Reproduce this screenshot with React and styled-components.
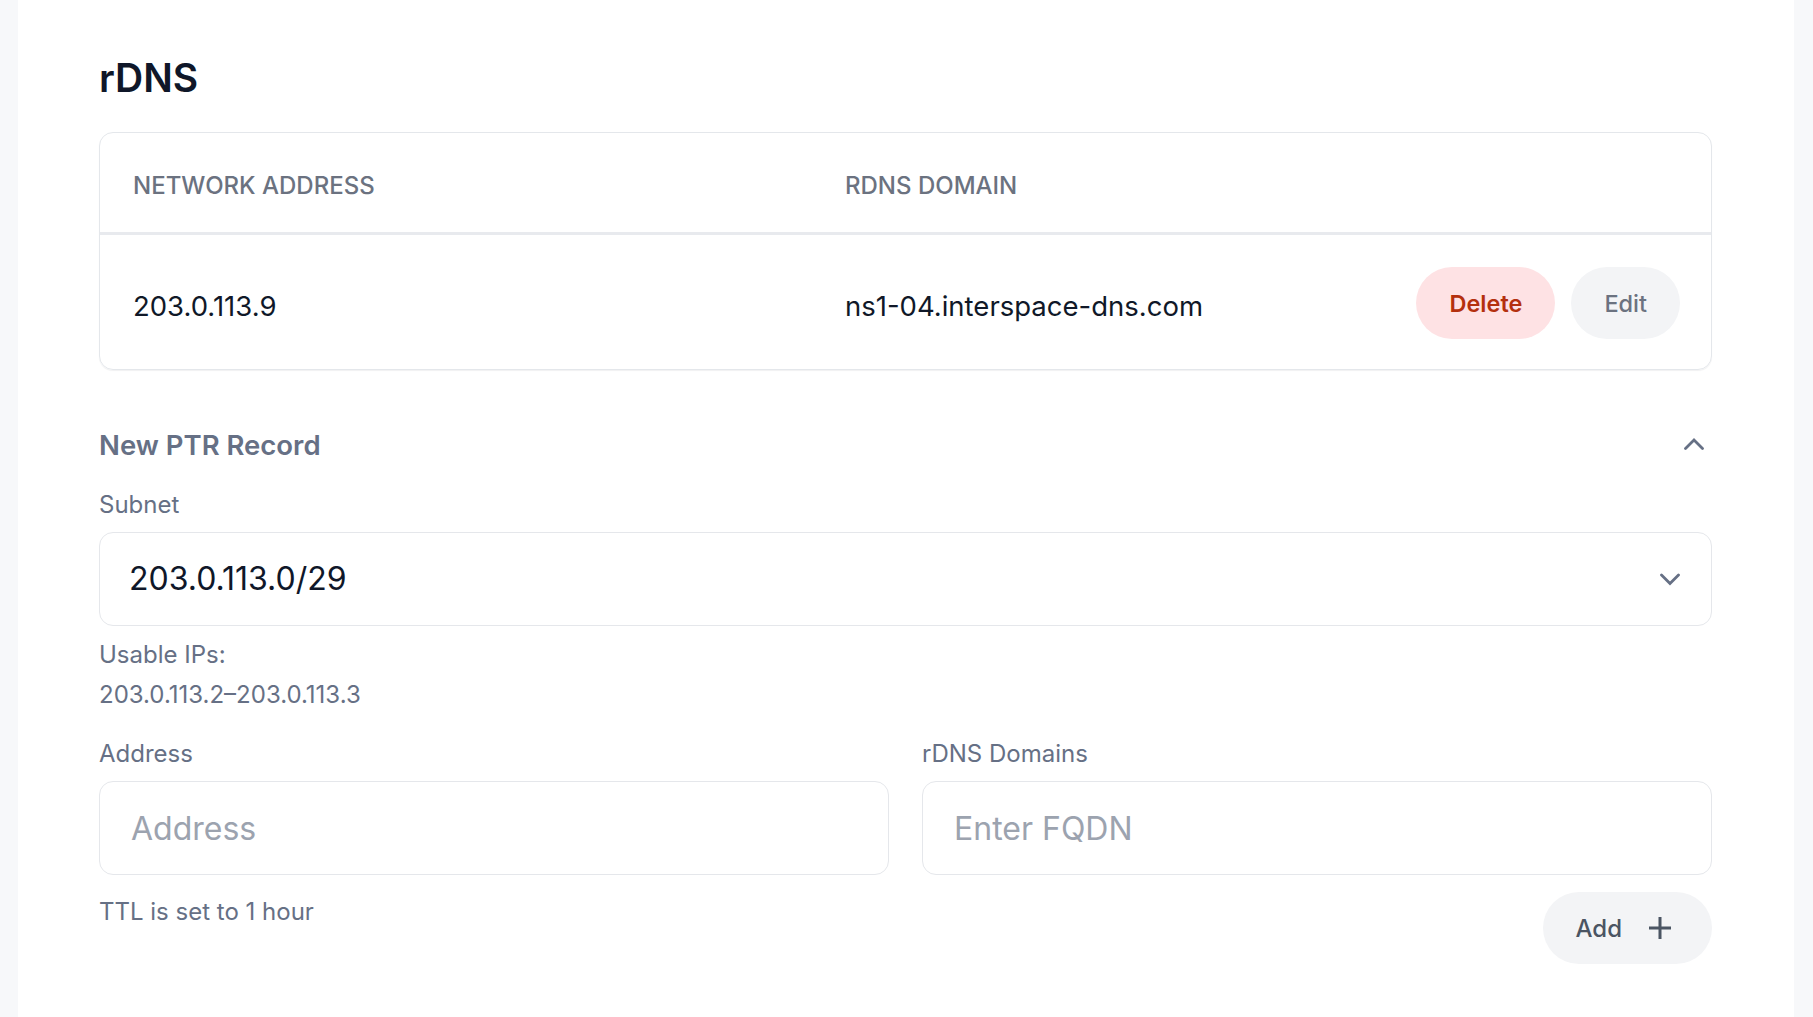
import React from 'react';
import styled, { createGlobalStyle } from 'styled-components';

const GlobalStyle = createGlobalStyle`
  html, body {
    margin: 0;
    padding: 0;
    background: #f7f8fa;
  }
  body {
    font-family: Inter, "Noto Sans", "Liberation Sans", sans-serif;
    -webkit-font-smoothing: antialiased;
  }
  * {
    box-sizing: border-box;
  }
`;

const ChevronUp = () => (
    <svg width="20" height="13" viewBox="0 0 20 13" fill="none">
        <polyline points="1.5,11.5 10,3 18.5,11.5" stroke="#667085" strokeWidth="2.8" strokeLinecap="round" />
    </svg>
);

const ChevronDown = () => (
    <svg width="20" height="13" viewBox="0 0 20 13" fill="none">
        <polyline points="1.5,2 10,10.5 18.5,2" stroke="#667085" strokeWidth="2.8" strokeLinecap="round" />
    </svg>
);

const PlusIcon = () => (
    <svg width="24" height="24" viewBox="0 0 24 24" fill="none">
        <path d="M12 1v22M1 12h22" stroke="#4b5563" strokeWidth="3" />
    </svg>
);

const App = () => {
    return (
        <>
            <GlobalStyle />
            <Page>
                <Title>rDNS</Title>
                <Card>
                    <HeadRow>
                        <HeadCell>Network Address</HeadCell>
                        <HeadCell>rDNS Domain</HeadCell>
                        <HeadCell />
                    </HeadRow>
                    <BodyRow>
                        <BodyCell>203.0.113.9</BodyCell>
                        <BodyCell>ns1-04.interspace-dns.com</BodyCell>
                        <Actions>
                            <Pill variant="danger">Delete</Pill>
                            <Pill>Edit</Pill>
                        </Actions>
                    </BodyRow>
                </Card>

                <SectionHead>
                    <SectionTitle>New PTR Record</SectionTitle>
                    <Toggle>
                        <ChevronUp />
                    </Toggle>
                </SectionHead>

                <Label>Subnet</Label>
                <Select>
                    <SelectValue>203.0.113.0/29</SelectValue>
                    <ChevronDown />
                </Select>

                <Helper>
                    <div>Usable IPs:</div>
                    <div>203.0.113.2–203.0.113.3</div>
                </Helper>

                <FieldGrid>
                    <Field>
                        <Label>Address</Label>
                        <Input placeholder="Address" />
                    </Field>
                    <Field>
                        <Label>rDNS Domains</Label>
                        <Input placeholder="Enter FQDN" />
                    </Field>
                </FieldGrid>

                <Footer>
                    <Note>TTL is set to 1 hour</Note>
                    <AddButton>
                        Add
                        <PlusIcon />
                    </AddButton>
                </Footer>
            </Page>
        </>
    );
};

const Page = styled.div`
    margin: 0 19px 0 18px;
    min-height: 100vh;
    background: #ffffff;
    padding: 54px 82px 40px 81px;
`;

const Title = styled.h1`
    margin: 0 0 31px;
    font-size: 39px;
    line-height: 47px;
    font-weight: 600;
    color: #0f1729;
`;

const Card = styled.div`
    border: 1px solid #e4e7eb;
    border-radius: 14px;
    box-shadow: 0 1px 1px rgba(16, 24, 40, 0.06);
    overflow: hidden;
`;

const HeadRow = styled.div`
    display: grid;
    grid-template-columns: 712px 1fr auto;
    border-bottom: 3px solid #e8eaee;
`;

const HeadCell = styled.div`
    padding: 36px 33px 30px;
    font-size: 24px;
    line-height: 33px;
    font-weight: 500;
    text-transform: uppercase;
    color: #6b7280;
`;

const BodyRow = styled.div`
    display: grid;
    grid-template-columns: 712px 1fr auto;
    align-items: center;
    height: 134px;
    padding-top: 2px;
`;

const BodyCell = styled.div`
    padding: 6px 33px 0;
    font-size: 27.5px;
    line-height: 36px;
    color: #101828;
`;

const Actions = styled.div`
    display: flex;
    gap: 16px;
    padding-right: 31px;
`;

const Pill = styled.button`
    height: 72px;
    padding: 0 33px;
    border: none;
    border-radius: 36px;
    font-family: inherit;
    font-size: 23.5px;
    font-weight: ${(p) => (p.variant === 'danger' ? 600 : 500)};
    background: ${(p) => (p.variant === 'danger' ? '#fee2e4' : '#f3f4f6')};
    color: ${(p) => (p.variant === 'danger' ? '#b4300e' : '#6b7280')};
    cursor: pointer;
`;

const SectionHead = styled.div`
    margin-top: 55px;
    height: 40px;
    display: flex;
    align-items: center;
    justify-content: space-between;
`;

const SectionTitle = styled.h2`
    margin: 0;
    font-size: 27.5px;
    line-height: 40px;
    font-weight: 600;
    color: #667085;
`;

const Toggle = styled.div`
    display: flex;
    margin: -4px 8px 0 0;
`;

const Label = styled.div`
    margin-top: 23px;
    font-size: 24px;
    line-height: 33px;
    color: #667085;
`;

const Select = styled.div`
    margin-top: 11px;
    height: 94px;
    border: 1px solid #e5e7eb;
    border-radius: 14px;
    padding: 0 31px 0 29px;
    display: flex;
    align-items: center;
    justify-content: space-between;
`;

const SelectValue = styled.span`
    font-size: 32px;
    line-height: 40px;
    color: #0f1729;
`;

const Helper = styled.div`
    margin-top: 9px;
    font-size: 24px;
    line-height: 40px;
    color: #667085;
`;

const FieldGrid = styled.div`
    display: grid;
    grid-template-columns: 1fr 1fr;
    gap: 33px;
    & > div > div:first-child {
        margin-top: 22px;
    }
`;

const Field = styled.div`
    display: flex;
    flex-direction: column;
`;

const Input = styled.input`
    margin-top: 11px;
    height: 94px;
    width: 100%;
    border: 1px solid #e5e7eb;
    border-radius: 14px;
    padding: 0 31px;
    font-family: inherit;
    font-size: 32px;
    color: #0f1729;
    outline: none;
    &::placeholder {
        color: #9ca3af;
    }
`;

const Footer = styled.div`
    margin-top: 17px;
    display: flex;
    justify-content: space-between;
    align-items: flex-start;
`;

const Note = styled.div`
    padding-top: 3px;
    font-size: 24px;
    line-height: 33px;
    color: #667085;
`;

const AddButton = styled.button`
    height: 72px;
    display: flex;
    align-items: center;
    gap: 26px;
    padding: 0 40px 0 33px;
    border: none;
    border-radius: 36px;
    background: #f3f4f6;
    font-family: inherit;
    font-size: 24px;
    font-weight: 500;
    color: #4b5563;
    cursor: pointer;
`;

export default App;
